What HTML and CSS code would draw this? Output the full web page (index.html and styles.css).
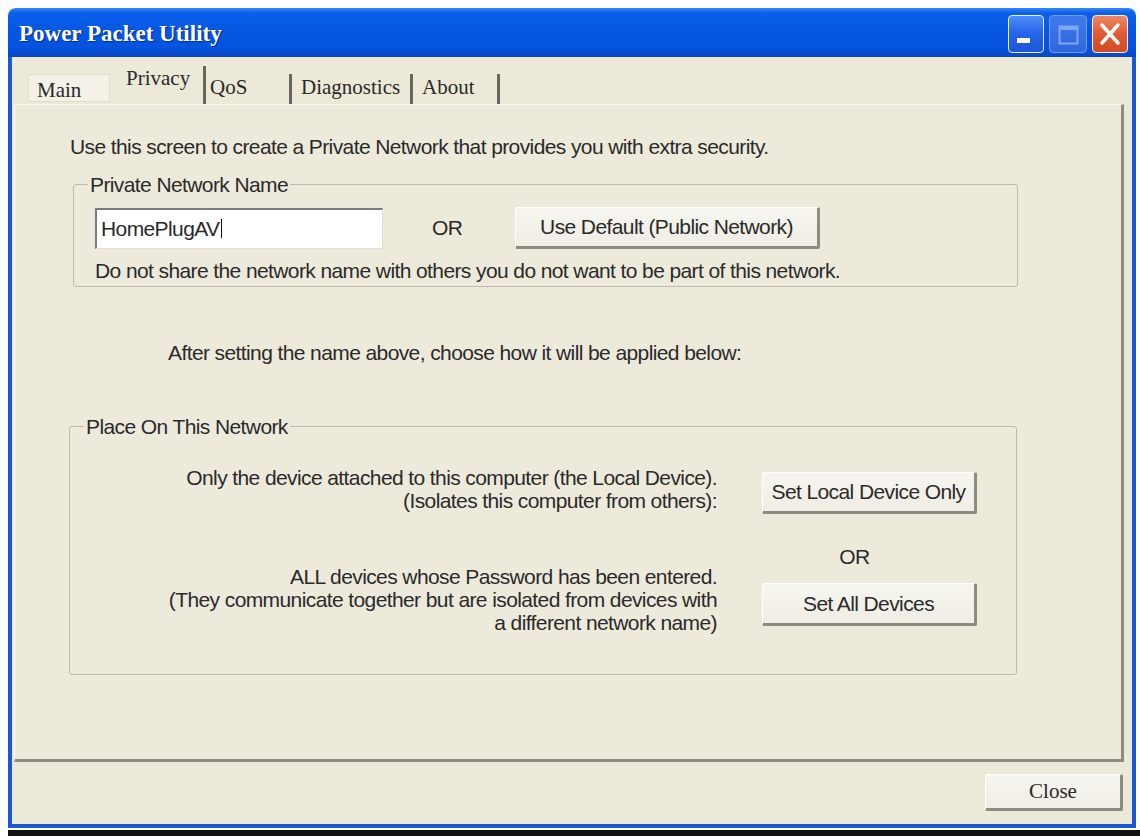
FILE: index.html
```html
<!DOCTYPE html>
<html lang="en">
<head>
    <meta charset="UTF-8">
    <meta name="viewport" content="width=device-width, initial-scale=1.0">
    <title>Power Packet Utility</title>
    <link rel="stylesheet" href="styles.css">
</head>
<body>
    <div class="window">
        <div class="titlebar">
            <span class="title">Power Packet Utility</span>
            <div class="caption-buttons">
                <span class="cap-btn cap-min">
                    <svg width="34" height="36" viewBox="0 0 34 36"><rect x="8" y="22" width="13" height="5" fill="#fff"/></svg>
                </span>
                <span class="cap-btn cap-max">
                    <svg width="36" height="36" viewBox="0 0 36 36"><rect x="9.5" y="10.5" width="18" height="17" fill="none" stroke="#7fa5ef" stroke-width="2"/><rect x="9" y="10" width="19" height="4" fill="#7fa5ef"/></svg>
                </span>
                <span class="cap-btn cap-close">
                    <svg width="34" height="36" viewBox="0 0 34 36"><path d="M9 9 L25 27 M25 9 L9 27" stroke="#fff" stroke-width="3.5" stroke-linecap="round"/></svg>
                </span>
            </div>
        </div>

        <div class="frame">
            <div class="tabs">
                <span class="tab tab-main">Main</span>
                <span class="tab tab-privacy">Privacy</span>
                <span class="tab tab-qos">QoS</span>
                <span class="tab tab-diag">Diagnostics</span>
                <span class="tab tab-about">About</span>
            </div>

            <div class="panel">
                <p class="line">Use this screen to create a Private Network that provides you with extra security.</p>

                <fieldset class="group group-name">
                    <legend>Private Network Name</legend>
                    <div class="name-row">
                        <div class="textbox">HomePlugAV<span class="caret"></span></div>
                        <span class="or">OR</span>
                        <button class="btn btn-default">Use Default (Public Network)</button>
                    </div>
                    <p class="line hint">Do not share the network name with others you do not want to be part of this network.</p>
                </fieldset>

                <p class="line after">After setting the name above, choose how it will be applied below:</p>

                <fieldset class="group group-place">
                    <legend>Place On This Network</legend>
                    <div class="choices">
                        <div class="choice-text">
                            <p class="line">Only the device attached to this computer (the Local Device).<br>(Isolates this computer from others):</p>
                            <p class="line">ALL devices whose Password has been entered.<br>(They communicate together but are isolated from devices with<br>a different network name)</p>
                        </div>
                        <div class="choice-actions">
                            <button class="btn btn-local">Set Local Device Only</button>
                            <span class="line or-mid">OR</span>
                            <button class="btn btn-all">Set All Devices</button>
                        </div>
                    </div>
                </fieldset>
            </div>

            <div class="footer">
                <button class="btn btn-close">Close</button>
            </div>
        </div>
    </div>
    <div class="base-line"></div>
</body>
</html>
```

FILE: styles.css
```css
:root {
    --face: #ECE9D8;
    --panel: #EDEADC;
    --text: #2a2a2a;
    --frame-blue: #1a58d6;
    --shadow: #8e8c82;
    --sep: #66655e;
}

* {
    box-sizing: border-box;
}

body {
    margin: 0;
    background: #fff;
    color: var(--text);
    font-family: "Liberation Sans", Arial, sans-serif;
    font-size: 21px;
}

.window {
    margin: 8px 0 0 8px;
    width: 1128px;
}

/* title bar */
.titlebar {
    height: 49px;
    display: flex;
    justify-content: space-between;
    padding: 0 8px 0 11px;
    border-radius: 8px 8px 0 0;
    background: linear-gradient(to bottom, #3a86f7 0%, #0a60ea 10%, #0657e4 45%, #0553de 80%, #0a48c6 100%);
}

.title {
    align-self: center;
    padding-top: 3px;
    font-family: "Liberation Serif", "Times New Roman", serif;
    font-weight: bold;
    font-size: 23px;
    color: #fff;
    text-shadow: 1px 1px 1px #0b2c88;
}

.caption-buttons {
    display: flex;
    gap: 5px;
    margin-top: 7px;
}

.cap-btn {
    width: 36px;
    height: 38px;
    border: 1px solid #e9f0fe;
    border-radius: 4px;
    display: flex;
    align-items: center;
    justify-content: center;
}

.cap-min {
    background: linear-gradient(to bottom, #4d8df6, #2563e8 50%, #1d55d8);
}

.cap-max {
    width: 38px;
    border-color: #6f9bf0;
    background: linear-gradient(to bottom, #3f7ae9, #2f66e0);
}

.cap-close {
    background: linear-gradient(to bottom, #ef8866, #df5a33 50%, #d14b24);
}

/* window body */
.frame {
    border: 4px solid var(--frame-blue);
    border-top: 0;
    background: var(--face);
}

.tabs {
    height: 47px;
    display: flex;
    align-items: flex-end;
    padding-left: 16px;
    font-family: "Liberation Serif", "Times New Roman", serif;
    font-size: 21px;
}

.tab {
    height: 30px;
    line-height: 24px;
    padding-top: 1px;
    border-right: 3px solid var(--sep);
}

.tab-main {
    width: 82px;
    height: 28px;
    margin-bottom: 2px;
    padding: 3px 0 0 8px;
    background: #f3f1e8;
    border: 1px solid #e0ddcf;
}

.tab-privacy {
    width: 96px;
    height: 38px;
    padding: 0 0 0 16px;
}

.tab-qos {
    width: 86px;
    padding-left: 4px;
}

.tab-diag {
    width: 121px;
    padding-left: 9px;
}

.tab-about {
    width: 87px;
    padding-left: 9px;
}

.panel {
    margin-left: 2px;
    width: 1110px;
    height: 658px;
    padding: 30px 0 0 55px;
    letter-spacing: -0.6px;
    background: var(--panel);
    border-top: 1px solid #fbfaf4;
    border-left: 1px solid #fbfaf4;
    border-right: 3px solid var(--shadow);
    border-bottom: 3px solid var(--shadow);
}

.line {
    margin: 0;
    line-height: 23px;
}

/* group boxes */
.group {
    min-width: 0;
    margin: 15px 0 0 3px;
    border: 1px solid #bdbaab;
    border-radius: 3px;
}

.group legend {
    padding: 0 2px;
    line-height: 23px;
}

.group-name {
    width: 945px;
    padding: 0 0 4px 21px;
}

.group-name legend {
    margin-left: -7px;
}

.name-row {
    display: flex;
    align-items: center;
    margin-top: 11px;
}

.textbox {
    width: 288px;
    height: 41px;
    display: flex;
    align-items: center;
    padding-left: 4px;
    background: #fff;
    border-top: 2px solid #7c7c78;
    border-left: 2px solid #7c7c78;
    border-right: 1px solid #e3e1d6;
    border-bottom: 1px solid #e3e1d6;
}

.caret {
    width: 1px;
    height: 19px;
    margin-left: 1px;
    background: #111;
}

.or {
    width: 132px;
    padding-left: 49px;
}

.btn {
    font: inherit;
    letter-spacing: inherit;
    color: var(--text);
    background: linear-gradient(to bottom, #f6f5ef, #efede4);
    border-top: 1px solid #fffffb;
    border-left: 1px solid #fffffb;
    border-right: 3px solid var(--shadow);
    border-bottom: 3px solid var(--shadow);
    border-radius: 2px;
    padding: 0;
    cursor: pointer;
}

.btn-default {
    width: 305px;
    height: 42px;
}

.hint {
    margin-top: 10px;
}

.after {
    margin: 54px 0 0 98px;
}

.group-place {
    width: 948px;
    margin: 51px 0 0 -1px;
    padding: 0 0 40px 0;
}

.group-place legend {
    margin-left: 14px;
}

.choices {
    display: flex;
    margin-top: 28px;
}

.choice-text {
    width: 647px;
    text-align: right;
}

.choice-text .line + .line {
    margin-top: 53px;
}

.choice-actions {
    width: 215px;
    margin-left: 45px;
    display: flex;
    flex-direction: column;
}

.btn-local {
    height: 42px;
    margin-top: 6px;
}

.or-mid {
    margin-top: 31px;
    padding-right: 30px;
    text-align: center;
}

.btn-all {
    height: 43px;
    margin-top: 15px;
}

.footer {
    display: flex;
    justify-content: flex-end;
    padding: 12px 9px 13px 0;
}

.btn-close {
    width: 138px;
    height: 37px;
    font-family: "Liberation Serif", "Times New Roman", serif;
    font-size: 21px;
    letter-spacing: normal;
}

.base-line {
    margin: 2px 0 0 8px;
    width: 1132px;
    height: 6px;
    background: #111;
}
```
